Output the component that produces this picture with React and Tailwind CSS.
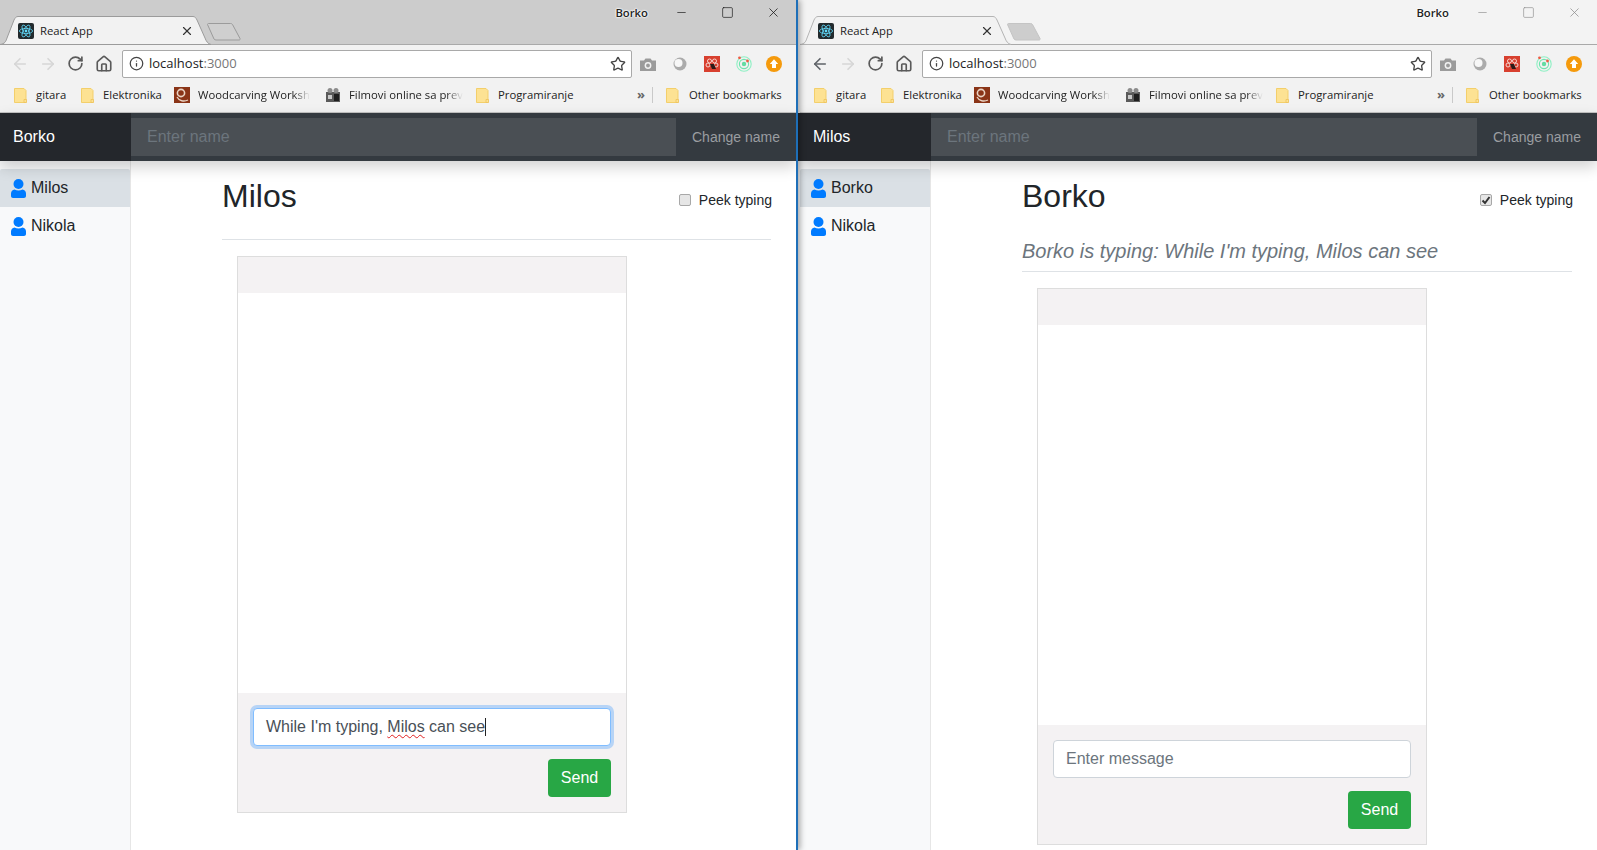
import React from 'react'
import { ArrowLeft, ArrowRight, RotateCw, Home, Info, Star, X, Minus, Square } from 'lucide-react'

const BOOKMARKS = [
  { label: 'gitara', icon: 'folder', cls: 'w-[67px]' },
  { label: 'Elektronika', icon: 'folder', cls: 'w-[93px]' },
  { label: 'Woodcarving Worksh', icon: 'wood', cls: 'w-[151px]', fade: true },
  { label: 'Filmovi online sa prev', icon: 'film', cls: 'w-[151px]', fade: true },
  { label: 'Programiranje', icon: 'folder', cls: 'w-[162px]' },
]

function Folder() {
  return (
    <svg width="13" height="15" viewBox="0 0 13 15" className="shrink-0">
      <path d="M.5.5h9.500l2 2v12H.5z" fill="#fde293" stroke="#f3cf6b" />
      <path d="M10 11.500h2.500v3H10z" fill="#fde293" stroke="#eec35c" strokeWidth=".8" />
    </svg>
  )
}

function WoodIcon() {
  return (
    <svg width="16" height="16" viewBox="0 0 16 16" className="shrink-0">
      <rect width="16" height="16" fill="#8a3417" />
      <circle cx="7" cy="6" r="3.600" fill="none" stroke="#e9d3c4" strokeWidth="1.600" />
      <path d="M3 10c2 4 7 5 11 3" fill="none" stroke="#e9d3c4" strokeWidth="1.300" />
    </svg>
  )
}

function FilmIcon() {
  return (
    <svg width="16" height="16" viewBox="0 0 16 16" className="shrink-0">
      <rect x="1" y="5" width="14" height="10" fill="#5a5a5a" />
      <circle cx="5" cy="3.500" r="2.500" fill="#8c8c8c" />
      <circle cx="11" cy="3.500" r="2.500" fill="#8c8c8c" />
      <rect x="9" y="7" width="5" height="7" fill="#1e1e1e" />
      <rect x="3" y="8" width="4" height="4" fill="#c9c9c9" />
    </svg>
  )
}

function ReactIcon() {
  return (
    <svg width="16" height="16" viewBox="0 0 16 16" className="shrink-0">
      <rect width="16" height="16" rx="2" fill="#222a2d" />
      <g fill="none" stroke="#61dafb" strokeWidth=".8">
        <ellipse cx="8" cy="8" rx="6.600" ry="2.600" />
        <ellipse cx="8" cy="8" rx="6.600" ry="2.600" transform="rotate(60 8 8)" />
        <ellipse cx="8" cy="8" rx="6.600" ry="2.600" transform="rotate(120 8 8)" />
      </g>
      <circle cx="8" cy="8" r="1.400" fill="#61dafb" />
    </svg>
  )
}

function UserIcon() {
  return (
    <svg width="15" height="19" viewBox="0 0 15 19" className="shrink-0 mr-[5px] text-[#007bff]">
      <circle cx="7.500" cy="5" r="5" fill="currentColor" />
      <path d="M3.500 10.500c2.500 1.300 5.500 1.300 8 0 2 .3 3.500 2 3.500 4V17c0 1.100-.9 2-2 2H2c-1.100 0-2-.9-2-2v-2.500c0-2 1.500-3.700 3.500-4z" fill="currentColor" />
    </svg>
  )
}

function Extensions() {
  return (
    <div className="flex items-center ml-[8px]">
      <svg width="16" height="16" viewBox="0 0 16 16" className="w-[16px] mr-[17px]">
        <path d="M0 4.500h4l1.500-2h5l1.500 2h4V15H0z" fill="#9b9b9b" />
        <circle cx="8" cy="9.500" r="3.400" fill="#f2f2f2" />
        <circle cx="8" cy="9.500" r="1.900" fill="#9b9b9b" />
      </svg>
      <svg width="14" height="14" viewBox="0 0 14 14" className="mr-[17px]">
        <circle cx="7" cy="7" r="6.500" fill="#ababab" />
        <circle cx="5.500" cy="6" r="4" fill="#f7f7f7" />
      </svg>
      <svg width="16" height="16" viewBox="0 0 16 16" className="mr-[16px]">
        <rect width="16" height="16" fill="#d8402f" />
        <circle cx="5.500" cy="5" r="2" fill="none" stroke="#f6d5cf" />
        <circle cx="10.500" cy="5" r="2" fill="none" stroke="#f6d5cf" />
        <circle cx="4" cy="9" r="2" fill="none" stroke="#f6d5cf" />
        <circle cx="12" cy="9" r="2" fill="none" stroke="#f6d5cf" />
        <path d="M6 8h4l2 5H8z" fill="#2b1a18" />
      </svg>
      <svg width="16" height="16" viewBox="0 0 16 16" className="mr-[14px]">
        <circle cx="8" cy="8" r="7.200" fill="none" stroke="#8ff0c4" strokeWidth="1.100" />
        <circle cx="8" cy="8" r="4.600" fill="none" stroke="#6fe3ae" strokeWidth="1.100" />
        <circle cx="8" cy="8" r="2.200" fill="#63dca3" />
        <circle cx="3.500" cy="1.800" r="1.400" fill="#ee5a43" />
        <circle cx="11.500" cy="5" r="1.400" fill="#ee5a43" />
      </svg>
      <svg width="16" height="16" viewBox="0 0 16 16">
        <circle cx="8" cy="8" r="8" fill="#f59a0c" />
        <path d="M8 3.200 12.200 8H10v4H6V8H3.800z" fill="#fff" />
      </svg>
    </div>
  )
}

function Chrome({ focused, canGoBack }) {
  const barBg = focused ? 'bg-[#cccccc]' : 'bg-[#f3f3f3]'
  const stroke = focused ? '#9b9b9b' : '#b4b4b4'
  const ctlColor = focused ? 'text-[#111]' : 'text-[#8c8c8c]'
  return (
    <div className="font-['Open_Sans',sans-serif] text-[11.3px] text-[#222]">
      <div className={`relative flex h-[45px] border-b border-[#a9a9a9] ${barBg}`}>
        <svg width="245" height="45" viewBox="0 0 245 45" className="absolute left-0 top-0">
          <path d="M0 44.500C5 44 6 41 7 38L14 20c1-2 2-3.500 4-3.500h175c2 0 3 1.500 4 3.500l8 18c1 3 3 6 6 6.500z" fill="#f2f2f2" stroke={stroke} />
          <path d="M207.500 24.500c0-.6.500-1 1-1h22c1 0 1.500.4 2 1l7.500 14c.4.800 0 1.500-1 1.500h-23c-1 0-1.500-.4-2-1z" fill={focused ? '#cfcfcf' : '#cdcdcd'} stroke={focused ? '#9b9b9b' : '#c4c4c4'} />
        </svg>
        <div className="relative flex items-center h-[28px] mt-[17px] pl-[18px] w-[204px]">
          <ReactIcon />
          <span className="ml-[6px] flex-1">React App</span>
          <X size={14} strokeWidth={2} className="text-[#333] mr-[10px]" />
        </div>
        <div className="flex-1" />
        <span className="mt-[5px] mr-[21px] h-[16px] font-semibold text-[#222] [text-shadow:0_0_2px_#fff,0_0_2px_#fff,0_0_2px_#fff]">Borko</span>
        <div className={`flex h-[25px] items-center w-[127px] ${ctlColor}`}>
          <Minus size={13} strokeWidth={1.200} className="ml-[6px]" />
          <Square size={13} strokeWidth={1.200} className="ml-[33px]" />
          <X size={15} strokeWidth={1.200} className="ml-[32px]" />
        </div>
      </div>
      <div className="flex items-center h-[37px] bg-[#f2f2f2] pl-[11px] pr-[14px]">
        <ArrowLeft size={18} strokeWidth={2.200} className={canGoBack ? 'text-[#5f6368]' : 'text-[#d6d6d6]'} />
        <ArrowRight size={18} strokeWidth={2.200} className="ml-[10px] text-[#d6d6d6]" />
        <RotateCw size={17} strokeWidth={2.400} className="ml-[10px] text-[#5a5a5a]" />
        <Home size={18} strokeWidth={2.200} className="ml-[11px] text-[#5a5a5a]" />
        <div className="ml-[9px] flex items-center w-[510px] h-[28px] bg-white border border-[#a9a9a9] rounded-[2px] pl-[6px] pr-[5px]">
          <Info size={15} strokeWidth={2} className="text-[#444]" />
          <span className="ml-[5px] flex-1 text-[13px]">localhost<span className="text-[#777]">:3000</span></span>
          <Star size={16} strokeWidth={2} className="text-[#444]" />
        </div>
        <Extensions />
      </div>
      <div className="flex items-center h-[31px] bg-[#f2f2f2] border-b border-[#c3c3c3] pl-[14px] pb-[4px]">
        {BOOKMARKS.map((b) => (
          <div key={b.label} className={`flex items-center shrink-0 ${b.cls}`}>
            {b.icon === 'folder' && <Folder />}
            {b.icon === 'wood' && <WoodIcon />}
            {b.icon === 'film' && <FilmIcon />}
            <span className={`whitespace-nowrap ${b.icon === 'folder' ? 'ml-[9px]' : 'ml-[8px]'} ${b.fade ? '[mask-image:linear-gradient(to_right,black_85%,transparent)]' : ''}`}>
              {b.label}
            </span>
          </div>
        ))}
        <span className="ml-[-1px] text-[13px] font-bold text-[#666] w-[14px]">»</span>
        <div className="w-px h-[16px] bg-[#c9c9c9] ml-[1px] mr-[13px]" />
        <Folder />
        <span className="ml-[10px] whitespace-nowrap">Other bookmarks</span>
      </div>
    </div>
  )
}

function Sidebar({ contacts }) {
  return (
    <aside className="w-[131px] shrink-0 bg-[#f8f9fa] border-r border-[#e6e6e6] pt-[8px]">
      {contacts.map((c, i) => (
        <div
          key={c}
          className={`flex items-center h-[38px] pl-[11px] text-[16px] text-[#212529] ${i === 0 ? 'bg-[#dae0e5] rounded-t-[2px]' : ''}`}
        >
          <UserIcon />
          {c}
        </div>
      ))}
    </aside>
  )
}

function ChatBox({ children }) {
  return (
    <div className="ml-[15px] mt-[16px] w-[390px] h-[557px] flex flex-col border border-[#dddddd] shrink-0">
      <div className="h-[36px] bg-[#f4f2f3]" />
      <div className="flex-1 bg-white" />
      <div className="h-[119px] bg-[#f4f2f3] px-[15px] pt-[15px]">
        {children}
        <div className="flex justify-end mt-[13px]">
          <button className="w-[63px] h-[38px] rounded-[4px] bg-[#28a745] text-white text-[16px]">Send</button>
        </div>
      </div>
    </div>
  )
}

// the right window sits 2px in from its edge, the left one casts a shadow on that strip
function Window({ me, contacts, title, peeking, typing, focused, inset, children, className }) {
  return (
    <div className={`flex flex-col h-[850px] overflow-hidden ${className}`}>
      <div className={`bg-[#f2f2f2] ${inset ? 'pl-[2px]' : ''}`}>
        <Chrome focused={focused} canGoBack={!focused} />
      </div>
      <div className={`relative z-10 bg-[#24272c] shadow-[0_6px_14px_rgba(0,0,0,0.18)] ${inset ? 'pl-[2px]' : ''}`}>
        <div className="flex items-center h-[48px] bg-[#343a40]">
          <div className="flex items-center w-[131px] h-full shrink-0 bg-[#24272c] pl-[13px] text-[16px] text-white">{me}</div>
          <div className="flex items-center flex-1 h-[38px] bg-[#4a4f54] pl-[16px] text-[16px] text-[#6c757d]">Enter name</div>
          <div className="w-[120px] pl-[16px] text-[14px] text-[#9a9da0]">Change name</div>
        </div>
      </div>
      <div className={`flex flex-1 min-h-0 bg-[#f8f9fa] ${inset ? 'pl-[2px]' : ''}`}>
        <Sidebar contacts={contacts} />
        <main className="flex-1 bg-white pl-[91px] pr-[25px]">
          <div className="flex justify-between h-[78px]">
            <h1 className="text-[32px] leading-[38px] mt-[16px] text-[#212529]">{title}</h1>
            <label className="flex items-center h-[16px] mt-[31px] -mr-[1px] text-[14px] text-[#212529]">
              <span className="flex items-center justify-center w-[12px] h-[12px] ml-[1px] mr-[8px] border border-[#a8a8a8] rounded-[2px] bg-[#e6e6e6]">
                {peeking && (
                  <svg width="10" height="10" viewBox="0 0 10 10">
                    <path d="M1.500 5.500 4 8l4.500-6" fill="none" stroke="#333" strokeWidth="2" />
                  </svg>
                )}
              </span>
              Peek typing
            </label>
          </div>
          {typing && <p className="h-[32px] text-[20px] leading-[24px] italic text-[#6c757d]">{typing}</p>}
          <div className="h-px bg-[#dee2e6]" />
          <ChatBox>{children}</ChatBox>
        </main>
      </div>
    </div>
  )
}

export default function App() {
  return (
    <div className="relative flex w-[1597px] h-[850px] overflow-hidden bg-white font-['Liberation_Sans',sans-serif]">
      <Window
        me="Borko"
        contacts={['Milos', 'Nikola']}
        title="Milos"
        focused
        className="relative z-20 w-[798px] shrink-0 border-r-2 border-[#1e6fb8] shadow-[2px_0_6px_rgba(0,0,0,0.35)]"
      >
        <div className="flex items-center h-[38px] bg-white border border-[#80bdff] rounded-[4px] px-[12px] text-[16px] text-[#495057] shadow-[0_0_0_3px_rgba(0,123,255,0.25)]">
          While I'm typing,&nbsp;
          <span className="underline decoration-wavy decoration-[#e02020] decoration-1 underline-offset-2">Milos</span>
          &nbsp;can see
          <span className="w-px h-[18px] bg-[#222]" />
        </div>
      </Window>
      <Window
        me="Milos"
        contacts={['Borko', 'Nikola']}
        title="Borko"
        peeking
        inset
        typing="Borko is typing: While I'm typing, Milos can see"
        className="w-[799px] shrink-0"
      >
        <input
          placeholder="Enter message"
          className="block w-full h-[38px] bg-white border border-[#ced4da] rounded-[4px] px-[12px] text-[16px] text-[#495057] placeholder:text-[#6c757d]"
        />
      </Window>
    </div>
  )
}
